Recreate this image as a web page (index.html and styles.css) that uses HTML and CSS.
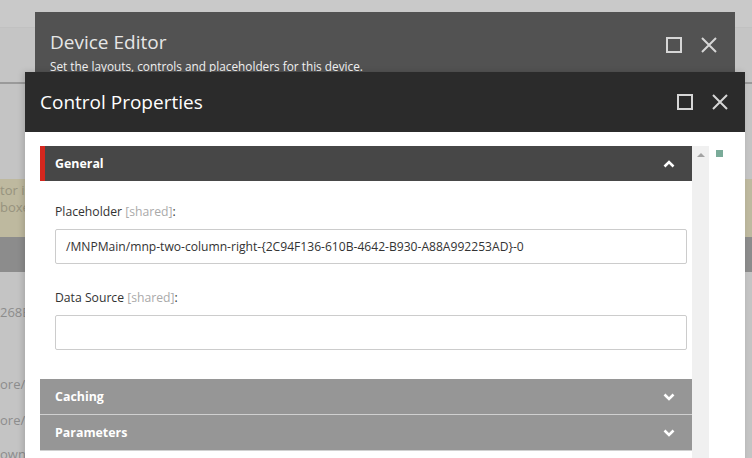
FILE: index.html
```
<!DOCTYPE html>
<html>
<head>
  <meta charset="UTF-8">
  <meta name="viewport" content="width=device-width, initial-scale=1">
  <title>Control Properties</title>
  <link rel="stylesheet" href="styles.css">
</head>

<body>
  <!-- page behind the dialogs, dimmed -->
  <div class="page">
    <div class="band band-top"></div>
    <div class="band band-nav"></div>
    <div class="band band-gap"></div>
    <div class="band band-warn">
      <p>tor is</p>
      <p>boxe</p>
    </div>
    <div class="band band-bar"></div>
    <div class="page-text">
      <p class="t1">268E</p>
      <p class="t2">ore/c</p>
      <p class="t3">ore/t</p>
      <p class="t4">own</p>
    </div>
  </div>

  <!-- Device editor window -->
  <div class="window device-editor">
    <div class="win-head">
      <div class="win-titles">
        <h1 class="win-title">Device Editor</h1>
        <p class="win-sub">Set the layouts, controls and placeholders for this device.</p>
      </div>
      <div class="win-btns">
        <span class="btn-max"></span>
        <svg class="btn-close" width="16" height="16" viewBox="0 0 16 16"><path d="M1 1L15 15M15 1L1 15" /></svg>
      </div>
    </div>
  </div>

  <!-- Control properties window -->
  <div class="window control-props">
    <div class="win-head dark">
      <h1 class="win-title">Control Properties</h1>
      <div class="win-btns">
        <span class="btn-max"></span>
        <svg class="btn-close" width="16" height="16" viewBox="0 0 16 16"><path d="M1 1L15 15M15 1L1 15" /></svg>
      </div>
    </div>

    <div class="win-body">
      <div class="sections">
        <div class="section-head active">
          <span>General</span>
          <svg class="chev" width="12" height="8" viewBox="0 0 12 8"><polyline points="1.5,6.5 6,2 10.5,6.5" /></svg>
        </div>
        <div class="section-body">
          <label class="field-label">Placeholder <span class="shared">[shared]</span>:</label>
          <div class="field">/MNPMain/mnp-two-column-right-{2C94F136-610B-4642-B930-A88A992253AD}-0</div>
          <label class="field-label">Data Source <span class="shared">[shared]</span>:</label>
          <div class="field"></div>
        </div>
        <div class="section-head">
          <span>Caching</span>
          <svg class="chev" width="12" height="8" viewBox="0 0 12 8"><polyline points="1.5,1.5 6,6 10.5,1.5" /></svg>
        </div>
        <div class="section-head">
          <span>Parameters</span>
          <svg class="chev" width="12" height="8" viewBox="0 0 12 8"><polyline points="1.5,1.5 6,6 10.5,1.5" /></svg>
        </div>
      </div>
      <div class="scrollbar">
        <span class="arrow-up"></span>
      </div>
      <div class="side">
        <span class="dot"></span>
      </div>
    </div>
  </div>
</body>

</html>
```

FILE: styles.css
```
* {
  box-sizing: border-box;
}
body {
  margin: 0;
  width: 752px;
  height: 458px;
  overflow: hidden;
  font-family: "Open Sans", Arial, sans-serif;
  background: #c4c4c4;
  position: relative;
}
p, h1 {
  margin: 0;
}

/* dimmed page */
.band-top {
  height: 28px;
  background: #c9c9c9;
  border-bottom: 1px solid #c1c1c1;
}
.band-nav {
  height: 56px;
  background: #c5c5c5;
  border-bottom: 2px solid #9a9a9a;
}
.band-gap {
  height: 95px;
}
.band-warn {
  height: 58px;
  background: #beb99f;
  padding-top: 3px;
  color: #97937e;
  font-size: 13px;
  line-height: 17px;
}
.band-bar {
  height: 35px;
  background: #8c8c8c;
}
.page-text {
  color: #8d8d8d;
  font-size: 13px;
  line-height: 16px;
}
.t1 { margin-top: 32px; }
.t2 { margin-top: 56px; }
.t3 { margin-top: 20px; }
.t4 { margin-top: 18px; }

/* windows */
.window {
  position: absolute;
}
.device-editor {
  left: 35px;
  top: 12px;
  width: 700px;
  height: 80px;
  background: #525252;
}
.control-props {
  left: 25px;
  top: 72px;
  width: 720px;
  height: 400px;
  background: #fff;
  box-shadow: -2px 0 6px rgba(0, 0, 0, 0.15);
}
.win-head {
  display: flex;
  justify-content: space-between;
  padding: 17px 18px 0 15px;
}
.win-head.dark {
  background: #2b2b2b;
  height: 60px;
  align-items: center;
  padding: 0 17px 0 15px;
}
.win-title {
  font-weight: normal;
  font-size: 19px;
  line-height: 26px;
  color: #e6e6e6;
}
.dark .win-title {
  color: #fff;
}
.win-sub {
  font-size: 11.8px;
  line-height: 16px;
  color: #f2f2f2;
  margin-top: 3px;
}
.win-btns {
  display: flex;
  align-items: center;
  gap: 19px;
  height: 42px;
  margin-top: -5px;
}
.dark .win-btns {
  height: auto;
  margin-top: 0;
}
.btn-max {
  width: 16px;
  height: 16px;
  border: 2px solid #d6d6d6;
}
.btn-close path {
  stroke: #d6d6d6;
  stroke-width: 2;
}

/* body */
.win-body {
  display: flex;
  padding: 14px 0 0 15px;
}
.sections {
  width: 652px;
}
.section-head {
  height: 36px;
  display: flex;
  align-items: center;
  justify-content: space-between;
  padding: 0 17px 0 15px;
  background: #969696;
  color: #fff;
  font-size: 12.4px;
  font-weight: bold;
  border-bottom: 1px solid #d0d0d0;
}
.section-head.active {
  height: 35px;
  background: #474747;
  border-left: 5px solid #d4271e;
  border-bottom: none;
  padding-left: 10px;
}
.chev polyline {
  fill: none;
  stroke: #fff;
  stroke-width: 2.6;
}
.section-body {
  padding: 22px 5px 29px 15px;
}
.field-label {
  display: block;
  font-size: 12.2px;
  line-height: 18px;
  color: #333;
  margin-bottom: 8px;
}
.shared {
  color: #aaa;
}
.field {
  height: 35px;
  border: 1px solid #ccc;
  border-radius: 2px;
  padding: 0 10px;
  font-size: 12.1px;
  line-height: 33px;
  color: #333;
  margin-bottom: 25px;
}
.field:last-child {
  margin-bottom: 0;
}
.scrollbar {
  width: 17px;
  height: 330px;
  background: #f0f0f0;
  display: flex;
  justify-content: center;
  padding-top: 7px;
}
.arrow-up {
  width: 0;
  height: 0;
  border-left: 4px solid transparent;
  border-right: 4px solid transparent;
  border-bottom: 4px solid #a3a3a3;
}
.side {
  padding: 4px 0 0 7px;
}
.dot {
  display: block;
  width: 7px;
  height: 7px;
  background: #7aab99;
}
```
